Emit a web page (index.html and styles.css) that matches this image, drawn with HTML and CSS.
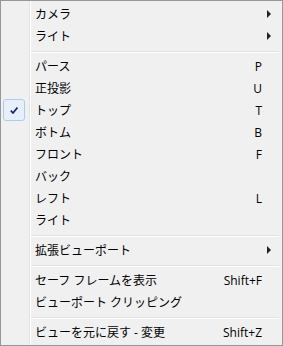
FILE: index.html
```html
<!DOCTYPE html>
<html lang="ja">

<head>
  <meta charset="UTF-8">
  <title>View Menu</title>
  <link rel="stylesheet" href="styles.css">
</head>

<body>
  <div class="menu">
    <div class="item"><span class="icon"></span><span class="label">カメラ</span><span class="arrow"></span></div>
    <div class="item"><span class="icon"></span><span class="label">ライト</span><span class="arrow"></span></div>
    <div class="sep"></div>
    <div class="item"><span class="icon"></span><span class="label">パース</span><span class="key">P</span></div>
    <div class="item"><span class="icon"></span><span class="label">正投影</span><span class="key">U</span></div>
    <div class="item">
      <span class="icon checked">
        <svg width="8" height="7" viewBox="0 0 8 7"><path d="M0.8 3.6 L3 6 L7.4 0.6" fill="none" stroke="#15207a" stroke-width="1.6"/></svg>
      </span>
      <span class="label">トップ</span><span class="key">T</span>
    </div>
    <div class="item"><span class="icon"></span><span class="label">ボトム</span><span class="key">B</span></div>
    <div class="item"><span class="icon"></span><span class="label">フロント</span><span class="key">F</span></div>
    <div class="item"><span class="icon"></span><span class="label">バック</span></div>
    <div class="item"><span class="icon"></span><span class="label">レフト</span><span class="key">L</span></div>
    <div class="item"><span class="icon"></span><span class="label">ライト</span></div>
    <div class="sep"></div>
    <div class="item"><span class="icon"></span><span class="label">拡張ビューポート</span><span class="arrow"></span></div>
    <div class="sep"></div>
    <div class="item"><span class="icon"></span><span class="label">セーフ フレームを表示</span><span class="key">Shift+F</span></div>
    <div class="item"><span class="icon"></span><span class="label">ビューポート クリッピング</span></div>
    <div class="sep"></div>
    <div class="item"><span class="icon"></span><span class="label">ビューを元に戻す - 変更</span><span class="key">Shift+Z</span></div>
  </div>
</body>

</html>
```

FILE: styles.css
```css
body {
  margin: 0;
  font-family: "Open Sans", "Noto Sans CJK JP", sans-serif;
  font-size: 12px;
  color: #000;
}

.menu {
  width: 283px;
  height: 346px;
  box-sizing: border-box;
  padding: 2px;
  border: 1px solid #979797;
  background: linear-gradient(to right, transparent 28px, #e2e3e3 28px, #e2e3e3 29px, #ffffff 29px, #ffffff 30px, transparent 30px), #f0f0f0;
}

.item {
  display: flex;
  align-items: center;
  height: 22px;
  padding-right: 9px;
}

.icon {
  width: 22px;
  height: 22px;
  margin-right: 10px;
  flex: none;
  box-sizing: border-box;
}

.icon.checked {
  display: flex;
  align-items: center;
  justify-content: center;
  border: 1px solid #a8cdf0;
  border-radius: 3px;
  background: #e6effa;
}

.label {
  flex: 1;
  white-space: nowrap;
}

.key {
  margin-right: 9px;
  text-align: right;
}

.arrow {
  width: 0;
  height: 0;
  border-top: 4px solid transparent;
  border-bottom: 4px solid transparent;
  border-left: 4px solid #222;
}

.sep {
  height: 8px;
  margin-left: 28px;
  margin-right: 1px;
  background: linear-gradient(to bottom, transparent 4px, #e2e3e3 4px, #e2e3e3 5px, #ffffff 5px, #ffffff 6px, transparent 6px);
}
```
